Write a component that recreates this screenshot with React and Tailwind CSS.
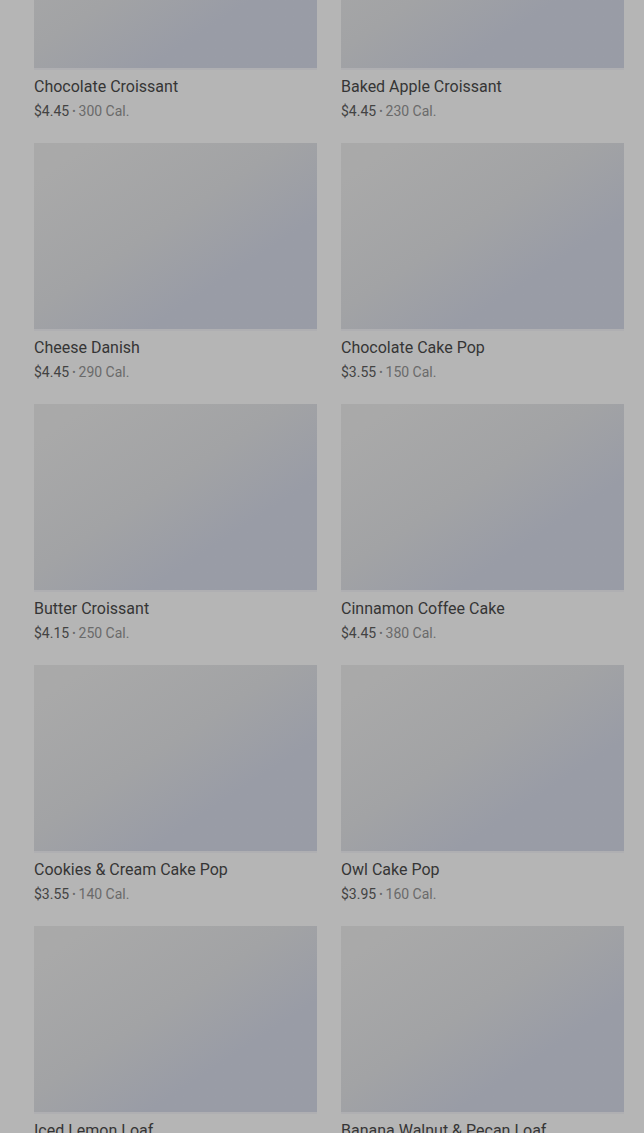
const items = [
  { name: 'Chocolate Croissant', price: '$4.45', cal: '300 Cal.' },
  { name: 'Baked Apple Croissant', price: '$4.45', cal: '230 Cal.' },
  { name: 'Cheese Danish', price: '$4.45', cal: '290 Cal.' },
  { name: 'Chocolate Cake Pop', price: '$3.55', cal: '150 Cal.' },
  { name: 'Butter Croissant', price: '$4.15', cal: '250 Cal.' },
  { name: 'Cinnamon Coffee Cake', price: '$4.45', cal: '380 Cal.' },
  { name: 'Cookies & Cream Cake Pop', price: '$3.55', cal: '140 Cal.' },
  { name: 'Owl Cake Pop', price: '$3.95', cal: '160 Cal.' },
  { name: 'Iced Lemon Loaf', price: '$3.95', cal: '470 Cal.' },
  { name: 'Banana Walnut & Pecan Loaf', price: '$3.95', cal: '410 Cal.' },
];

const ProductCard = ({ item }) => (
  <div className="flex flex-col">
    <div className="h-[188px] w-full bg-gradient-to-br from-[#a9a9a9] from-10% via-[#a2a3a5] via-45% to-[#999ca6] to-70% border-b-[2px] border-[#afafb2]" />
    <div className="mt-[5px] text-[16px] leading-6 text-[#353535]">{item.name}</div>
    <div className="mt-[2px] text-[14px] leading-5 text-[#6a6a6a]">
      <span className="text-[#434343]">{item.price}</span>
      <span className="mx-[3px] text-[10px] align-[1px]">•</span>
      <span>{item.cal}</span>
    </div>
  </div>
);

const App = () => {
  return (
    <div
      className="h-[1133px] w-full overflow-hidden bg-[#b5b5b5]"
      style={{ fontFamily: 'Roboto, "Liberation Sans", sans-serif' }}
    >
      <div className="mt-[-118px] grid grid-cols-2 gap-x-6 gap-y-[21px] pl-[34px] pr-[20px]">
        {items.map((item) => (
          <ProductCard key={item.name} item={item} />
        ))}
      </div>
    </div>
  );
};

export default App;
